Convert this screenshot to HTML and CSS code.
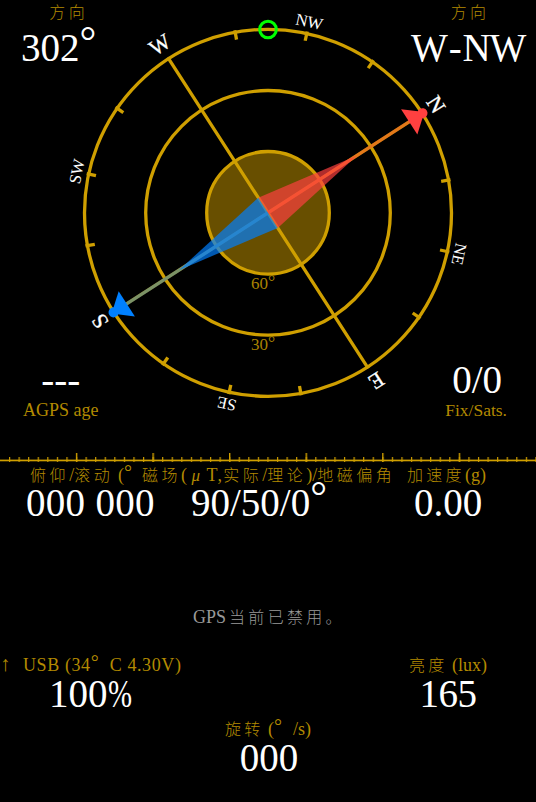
FILE: index.html
```html
<!DOCTYPE html>
<html lang="zh-CN">
<head>
<meta charset="utf-8">
<title>GPS Status</title>
<link rel="stylesheet" href="styles.css">
</head>
<body>
<main class="screen">
  <section class="compass">
    <svg class="dial" viewBox="0 0 536 458" width="536" height="458">
      <circle class="ring core" cx="268" cy="212.8" r="61.3"/>
      <circle class="ring" cx="268" cy="212.8" r="122.3"/>
      <circle class="ring" cx="268" cy="212.8" r="183.5"/>
      <text class="pitch" x="251" y="288.5">60<tspan class="ring-deg" dy="-1">°</tspan></text>
      <text class="pitch" x="251" y="349.5">30<tspan class="ring-deg" dy="-1">°</tspan></text>
      <g transform="translate(268 212.8) rotate(57.2)">
        <path class="axis" d="M-185 0H185M0-172V172"/>
        <g class="ticks">
          <path d="M0-185.5V-176" transform="rotate(22.5)"/>
          <path d="M0-185.5V-176" transform="rotate(45)"/>
          <path d="M0-185.5V-176" transform="rotate(67.5)"/>
          <path d="M0-185.5V-176" transform="rotate(112.5)"/>
          <path d="M0-185.5V-176" transform="rotate(135)"/>
          <path d="M0-185.5V-176" transform="rotate(157.5)"/>
          <path d="M0-185.5V-176" transform="rotate(202.5)"/>
          <path d="M0-185.5V-176" transform="rotate(225)"/>
          <path d="M0-185.5V-176" transform="rotate(247.5)"/>
          <path d="M0-185.5V-176" transform="rotate(292.5)"/>
          <path d="M0-185.5V-176" transform="rotate(315)"/>
          <path d="M0-185.5V-176" transform="rotate(337.5)"/>
        </g>
        <path class="tint-n" d="M0 0V-170"/>
        <path class="tint-s" d="M0 0V170"/>
        <path class="needle-n" d="M-18 0L0-106L18 0Z"/>
        <path class="needle-s" d="M-18 0L0 106L18 0Z"/>
        <path class="north" d="M0-186L-15-168H15Z"/><circle class="north" cy="-183.8" r="5"/>
        <path class="south" d="M0 186L-15 168H15Z"/><circle class="south" cy="183.8" r="5"/>
        <g class="cardinal">
          <text y="-192.5">N</text>
          <text y="-192.5" transform="rotate(90)">E</text>
          <text y="-192.5" transform="rotate(180)">S</text>
          <text y="-192.5" transform="rotate(270)">W</text>
        </g>
        <g class="ordinal">
          <text y="-190" transform="rotate(45)">NE</text>
          <text y="-190" transform="rotate(135)">SE</text>
          <text y="-190" transform="rotate(225)">SW</text>
          <text y="-190" transform="rotate(315)">NW</text>
        </g>
      </g>
      <circle class="marker" cx="268" cy="29.5" r="8.3"/>
    </svg>
    <div class="readout heading">
      <span class="label cjk">方向</span>
      <span class="value">302<span class="deg">°</span></span>
    </div>
    <div class="readout direction">
      <span class="label cjk">方向</span>
      <span class="value">W<span class="dash">-</span>NW</span>
    </div>
    <div class="readout agps">
      <span class="value">---</span>
      <span class="label">AGPS age</span>
    </div>
    <div class="readout sats">
      <span class="value">0/0</span>
      <span class="label">Fix/Sats.</span>
    </div>
  </section>

  <svg class="ruler" width="536" height="9" viewBox="0 0 536 9">
    <defs>
      <pattern id="minor" width="9.571" height="9" patternUnits="userSpaceOnUse" x="-0.6"><path d="M0 4h1.2v5h-1.2z"/></pattern>
      <pattern id="major" width="76.57" height="9" patternUnits="userSpaceOnUse" x="-0.7"><path d="M0 0h1.4v9h-1.4z"/></pattern>
    </defs>
    <rect x="4" width="532" height="9" fill="url(#minor)"/>
    <rect x="4" width="528" height="9" fill="url(#major)"/>
    <rect y="6.6" width="536" height="1.7"/>
  </svg>

  <section class="sensors">
    <div class="labels">
      <span class="label tilt"><b>俯仰</b>/<b>滚动</b> (<span class="ldeg">°</span></span>
      <span class="label field"><b>磁场</b>( <em>μ</em> <span class="unit">T,</span><b>实际</b>/<b>理论</b>)/<b>地磁偏角</b></span>
      <span class="label accel"><b>加速度</b>(g)</span>
    </div>
    <div class="values">
      <span class="value tilt">000 000</span>
      <span class="value field">90/50/0<span class="deg">°</span></span>
      <span class="value accel">0.00</span>
    </div>
  </section>

  <p class="status">GPS<b>当前已禁用。</b></p>

  <section class="device">
    <div class="readout battery">
      <span class="label"><span class="arrow">↑</span>USB (34<span class="ldeg wide">°</span>C 4.30V)</span>
      <span class="value">100<span class="percent">%</span></span>
    </div>
    <div class="readout light">
      <span class="label"><b>亮度</b> (lux)</span>
      <span class="value">165</span>
    </div>
  </section>

  <section class="readout rotation">
    <span class="label"><b>旋转</b> (<span class="ldeg wide">°</span>/s)</span>
    <span class="value">000</span>
  </section>
</main>
</body>
</html>
```
FILE: styles.css
```css
* { box-sizing: border-box; }
body {
  margin: 0;
  background: #000;
  font-family: "Liberation Serif", "Noto Sans CJK SC", serif;
}
.screen {
  width: 536px;
  height: 802px;
  overflow: hidden;
  display: flex;
  flex-direction: column;
  background: #000;
  color: #fff;
}

/* Compass */
.compass {
  height: 453px;
  flex: none;
  display: grid;
  grid-template-columns: 1fr 1fr;
  grid-template-rows: 226px 227px;
}
.dial { grid-area: 1 / 1 / 3 / 3; height: 458px; }
.ring { fill: none; stroke: #cf9f00; stroke-width: 3.3; }
.core { fill: #684f00; }
.axis, .ticks { fill: none; stroke: #cf9f00; stroke-width: 3.3; }
.tint-n { stroke: #ff4040; stroke-width: 3.3; opacity: .4; }
.tint-s { stroke: #0080ff; stroke-width: 3.3; opacity: .4; }
.needle-n { fill: #ff4040; opacity: .69; }
.needle-s { fill: #0080ff; opacity: .69; }
.north { fill: #ff4040; }
.south { fill: #0080ff; }
.marker { fill: none; stroke: #0f0; stroke-width: 3.1; }
.cardinal, .ordinal { fill: #fff; text-anchor: middle; }
.cardinal { font-size: 22px; stroke: #fff; stroke-width: .3px; }
.ordinal { font-size: 16.5px; }
.pitch { font-size: 17px; fill: #a98200; }
.ring-deg { font-size: 18px; }

/* Readouts */
.readout { display: flex; flex-direction: column; align-items: center; }
.label {
  font-size: 18px;
  line-height: 20px;
  height: 20px;
  color: #b38a00;
  white-space: pre;
}
.value {
  font-size: 39px;
  line-height: 39px;
  height: 39px;
  white-space: pre;
}
b, .cjk { font-weight: 300; font-size: 16px; letter-spacing: 3.3px; }
.deg { font-size: 42px; line-height: 0; vertical-align: 6px; }
.heading { grid-area: 1 / 1; justify-self: start; margin: 3px 0 0 21px; }
.heading .label { margin-left: 20px; }
.heading .value { margin-top: 5px; }
.direction { grid-area: 1 / 2; justify-self: end; margin: 3px 11px 0 0; }
.direction .label { margin-left: 4px; }
.direction .value { margin-top: 5px; letter-spacing: -1.2px; }
.dash { margin: 0 2px; }
.agps, .sats { align-self: end; margin-bottom: 33px; }
.agps { grid-area: 2 / 1; justify-self: start; margin-left: 23px; }
.sats { grid-area: 2 / 2; justify-self: end; margin-right: 29px; }
.agps .value { margin-bottom: 1px; }
.sats .value { margin: 0 0 1px 2px; }
.sats .label { font-size: 17.5px; }

.ruler { display: block; flex: none; fill: #cf9f00; }

/* Sensors */
.sensors { height: 62px; flex: none; padding-top: 3px; }
.labels, .values { display: flex; }
.labels { padding-left: 30px; }
.labels .tilt { width: 112px; }
.labels .tilt b { letter-spacing: 3.6px; }
.ldeg { font-size: 20px; line-height: 0; vertical-align: 2px; }
.labels .field { width: 265px; }
.labels .field b { letter-spacing: 3.5px; }
.unit { letter-spacing: 1.2px; margin-left: 2px; }
.values { margin-top: -2px; padding-left: 26px; }
.values .tilt { width: 165px; letter-spacing: .3px; }
.values .field { width: 223px; }
em { font-size: 17px; }

.status {
  margin: 83px 0 0 193px;
  font-size: 18px;
  line-height: 20px;
  height: 20px;
  color: #999;
  white-space: nowrap;
}
.status b { margin-left: 3px; }

/* Device */
.device { display: flex; justify-content: space-between; margin-top: 28px; padding-right: 49px; }
.battery { align-items: flex-start; }
.battery .label { letter-spacing: .6px; }
.battery .value { margin: -1px 0 0 49px; }
.percent { display: inline-block; transform: scaleX(.74); transform-origin: left; margin-right: -8px; }
.light .value { margin-top: -1px; letter-spacing: -.6px; }
.arrow { display: inline-block; width: 23px; font-size: 21px; line-height: 0; }
.wide { display: inline-block; width: 19px; }
.rotation { margin-top: 6px; }
.rotation .value { margin: -1px 0 0 2px; }
```
